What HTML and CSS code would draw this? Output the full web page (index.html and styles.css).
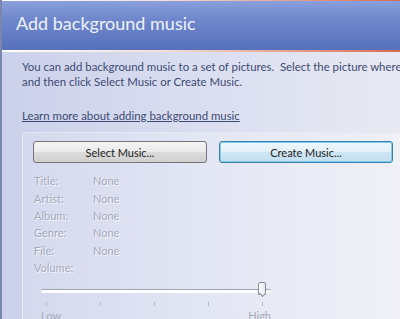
FILE: index.html
```html
<!DOCTYPE html>
<html>
<head>
    <title>Add background music</title>
    <link rel="stylesheet" href="styles.css">
</head>
<body>
    <div class="window">
        <div class="header">
            <h1>Add background music</h1>
        </div>
        <div class="content">
            <p class="intro">You can add background music to a set of pictures.&nbsp; Select the picture where you want the music to start,<br>and then click Select Music or Create Music.</p>
            <a class="learn" href="#">Learn more about adding background music</a>
            <div class="panel">
                <div class="buttons">
                    <button class="btn">Select Music...</button>
                    <button class="btn btn-default">Create Music...</button>
                </div>
                <div class="info">
                    <span class="label">Title:</span><span class="value">None</span>
                    <span class="label">Artist:</span><span class="value">None</span>
                    <span class="label">Album:</span><span class="value">None</span>
                    <span class="label">Genre:</span><span class="value">None</span>
                    <span class="label">File:</span><span class="value">None</span>
                    <span class="label">Volume:</span><span class="value"></span>
                </div>
                <div class="slider">
                    <div class="track">
                        <div class="thumb"></div>
                    </div>
                    <div class="ticks">
                        <span></span><span></span><span></span><span></span><span></span>
                    </div>
                    <div class="scale">
                        <span>Low</span>
                        <span>High</span>
                    </div>
                </div>
            </div>
        </div>
    </div>
</body>
</html>
```

FILE: styles.css
```css
html, body {
    margin: 0;
    height: 100%;
    overflow: hidden;
}
body {
    font-family: Lato, 'Open Sans', sans-serif;
    background: #dfe2f0;
}
.window {
    height: 100%;
    border-left: 2px solid #7a86ac;
    background: linear-gradient(90deg, #cbd1ea 0%, #dadef0 50%, #e8e9f2 100%);
    white-space: nowrap;
    overflow: hidden;
}
.header {
    height: 52px;
    background: linear-gradient(180deg, #8aa0dc 0%, #7088cc 35%, #5670bc 100%);
    border-top: 1px solid #a8b8e4;
    box-sizing: border-box;
    border-bottom: 2px solid;
    border-image: linear-gradient(90deg, #ffffff 0%, #f4e0d8 40%, #d86a50 100%) 1;
    padding: 11px 0 0 14px;
}
h1 {
    margin: 0;
    font-weight: normal;
    font-size: 18px;
    color: #eef2fa;
}
.content {
    padding: 7px 0 0 20px;
    color: #3c4a74;
    font-size: 11.4px;
}
.intro {
    margin: 0;
    line-height: 15px;
}
.learn {
    display: inline-block;
    margin-top: 19px;
    color: #3c4a74;
    line-height: 15px;
}
.panel {
    margin-top: 9px;
    width: 420px;
    height: 200px;
    border: 1px solid #e6e8f4;
    border-radius: 4px;
    background: linear-gradient(90deg, rgba(255,255,255,0.15), rgba(255,255,255,0.35));
    padding: 8px 0 0 10px;
    box-sizing: border-box;
}
.buttons {
    display: flex;
    gap: 12px;
}
.btn {
    width: 174px;
    height: 22px;
    font-family: Lato, 'Open Sans', sans-serif;
    font-size: 11px;
    color: #222;
    border: 1px solid #767676;
    border-radius: 3px;
    background: linear-gradient(180deg, #f4f4f4 0%, #ebebeb 48%, #dcdcdc 52%, #d0d0d0 100%);
    padding: 0;
}
.btn-default {
    border: 1px solid #3c7fb1;
    box-shadow: inset 0 0 0 1px #7fcce8;
    background: linear-gradient(180deg, #eef7fc 0%, #e2f0f8 48%, #cfe6f3 52%, #c2def0 100%);
}
.info {
    display: grid;
    grid-template-columns: 59px auto;
    grid-auto-rows: 17.4px;
    margin: 9px 0 0 1px;
    font-size: 11px;
    color: #a6aabb;
    text-shadow: 1px 1px 0 #f4f6fc;
    align-items: center;
}
.slider {
    width: 230px;
    margin: 8px 0 0 8px;
}
.track {
    position: relative;
    height: 3px;
    margin-top: 13px;
    border-top: 1px solid #a0a4b0;
    background: #ffffff;
    border-radius: 2px;
}
.thumb {
    position: absolute;
    left: 217px;
    top: -8px;
    width: 6px;
    height: 11px;
    border: 1px solid #8a8e9a;
    border-radius: 2px 2px 0 0;
    background: linear-gradient(90deg, #ffffff, #e6e8ee);
}
.thumb::after {
    content: '';
    position: absolute;
    left: 0;
    top: 10px;
    width: 4px;
    height: 4px;
    border-right: 1px solid #8a8e9a;
    border-bottom: 1px solid #8a8e9a;
    background: #f2f3f6;
    transform: translate(1px, -2px) rotate(45deg);
}
.ticks {
    display: flex;
    justify-content: space-between;
    padding: 0 8px 0 5px;
    margin-top: 9px;
}
.ticks span {
    width: 1px;
    height: 4px;
    background: #b8bccb;
}
.scale {
    display: flex;
    justify-content: space-between;
    margin-top: 3px;
    font-size: 11px;
    color: #a6aabb;
}
```
